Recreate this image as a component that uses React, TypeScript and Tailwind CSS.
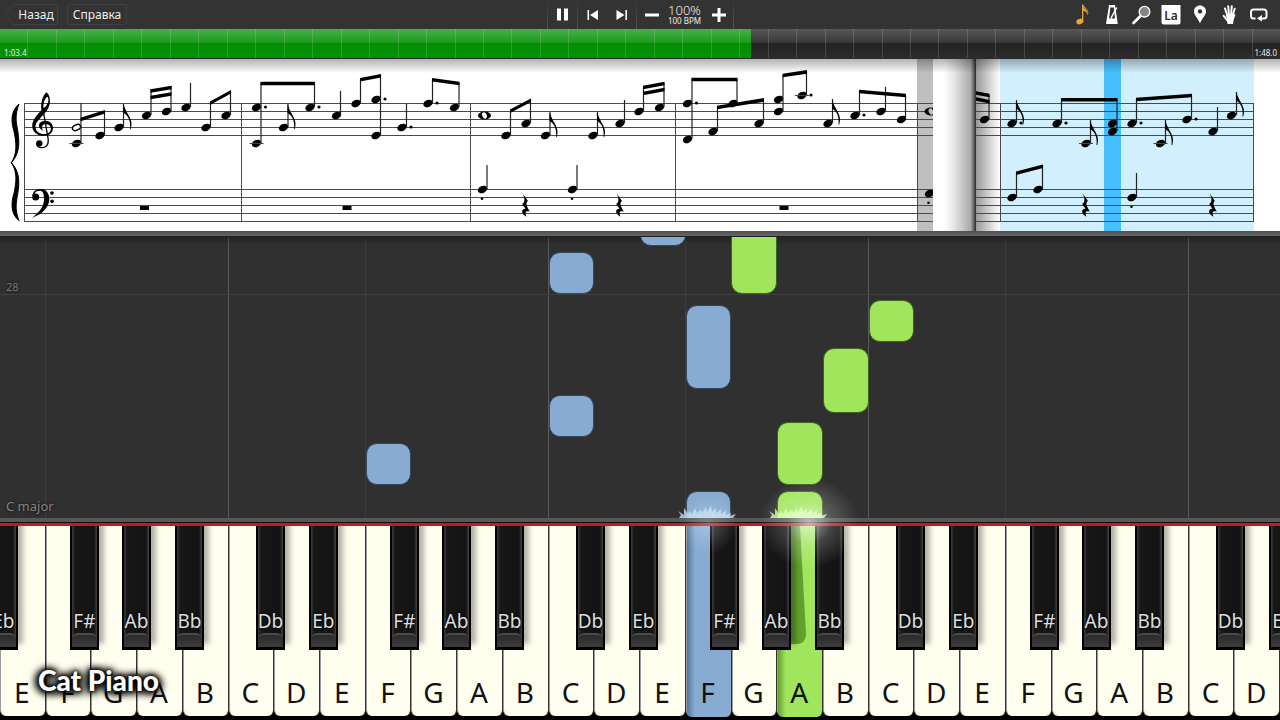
import type { ReactNode } from "react";

const LANES = 28;
const lanePercent = (lane: number) => `${(lane / LANES) * 100}%`;

/* ---------- Toolbar ---------- */

function IconButton({ label, children }: { label: string; children: ReactNode }) {
  return (
    <button type="button" aria-label={label} className="h-[29px] w-[29px] shrink-0">
      <svg viewBox="0 0 29 29" className="h-[29px] w-[29px]" fill="white">
        {children}
      </svg>
    </button>
  );
}

function Separator() {
  return <span className="h-[29px] w-px bg-linear-to-b from-transparent via-[#444444] to-[#555555]" />;
}

function Toolbar() {
  return (
    <header className="grid h-[29px] grid-cols-[1fr_auto_1fr] bg-[#333333] text-[#ececec]">
      <nav className="flex items-center gap-[9px] pl-1 text-xs">
        <button type="button" className="relative h-[21px] w-[54px] pl-[10px] text-center">
          <svg viewBox="0 0 54 21" className="absolute inset-0 h-[21px] w-[54px]" fill="none" stroke="#404040">
            <path d="M10 .5H53.500V20.500H10L.7 10.500Z" />
          </svg>
          <span className="relative">Назад</span>
        </button>
        <button type="button" className="h-[21px] w-[60px] rounded-xs border border-[#404040] leading-[19px]">
          Справка
        </button>
      </nav>

      <div className="flex items-center">
        <Separator />
        <IconButton label="Pause">
          <path d="M9 8.500h4v12H9zM16 8.500h4v12h-4z" />
        </IconButton>
        <Separator />
        <IconButton label="Previous">
          <path d="M9.500 10h1.600v10H9.500zM20 10v10l-8-5z" />
        </IconButton>
        <IconButton label="Next">
          <path d="M20 10h-1.600v10H20zM9.500 10v10l8-5z" />
        </IconButton>
        <Separator />
        <IconButton label="Slower">
          <path d="M8 13.500h14v3H8z" />
        </IconButton>
        <div className="flex w-[38px] flex-col items-center">
          <span className="text-[13px] leading-[13px] font-light">100%</span>
          <span className="whitespace-nowrap text-[8px] leading-[8px]">100 BPM</span>
        </div>
        <IconButton label="Faster">
          <path d="M8 13.500h5.500V8h3v5.500H22v3h-5.500V22h-3v-5.500H8z" />
        </IconButton>
        <Separator />
      </div>

      <div className="flex justify-end pr-1.5">
        <div className="flex w-[206px] justify-between">
          <IconButton label="Notes">
            <ellipse cx="11.800" cy="21.500" rx="3.600" ry="2.700" transform="rotate(-20 11.800 21.500)" fill="#e9a33b" />
            <path
              d="M14 4.500h1.300c.4 3 5 4.300 5 8 0 1.300-.3 2-.8 3 .2-3-2-4-4.200-4.800v10.800H14zM15.300 8c2 2 4.500 3 4.400 5.300"
              fill="#e9a33b"
            />
            <path d="M15.500 7.500c2 2.300 4.500 2.800 4.400 6" fill="none" stroke="#6b4e24" strokeWidth=".7" />
          </IconButton>
          <IconButton label="Metronome">
            <path fillRule="evenodd" d="M11 5h6l2.800 19H8zM12.400 7.500 11 18.500h6L15.800 7.500z" />
            <path d="M12.800 18.500 18.800 7.500" stroke="white" strokeWidth="1.500" />
          </IconButton>
          <IconButton label="Zoom">
            <path d="M13.500 16 6.500 23" stroke="white" strokeWidth="2.600" strokeLinecap="round" />
            <circle cx="17.500" cy="11.700" r="5.300" fill="#858585" stroke="white" strokeWidth="1.400" />
          </IconButton>
          <IconButton label="Note names">
            <path d="M4.500 5h19v17q0 2.500-2.500 2.500h-14Q4.500 24.500 4.500 22z" />
            <text x="14" y="19.500" textAnchor="middle" fontSize="12" fontWeight="600" fill="#2b2b2b">
              La
            </text>
          </IconButton>
          <IconButton label="Marker">
            <path
              fillRule="evenodd"
              d="M14 5.500c3.400 0 6 2.600 6 5.900 0 3.800-4 6.600-6 12-2-5.400-6-8.200-6-12 0-3.300 2.600-5.900 6-5.900zm0 3.700a2.200 2.200 0 1 0 0 4.400 2.200 2.200 0 0 0 0-4.400z"
            />
          </IconButton>
          <IconButton label="Hands">
            <path d="M10 14h7.500l2 .5-2 6-.5 3.500h-5.500l-.5-3z" />
            <path
              d="m11.500 16-2.500-7.500M13 15l-.8-8.800M15 15l.8-8.800M16.500 16l2.200-7.200M11.500 20.500l-3.800-4.700"
              fill="none"
              stroke="white"
              strokeWidth="2"
              strokeLinecap="round"
            />
          </IconButton>
          <IconButton label="Loop">
            <path
              d="M10.500 18.500H8.500A2.500 2.500 0 0 1 6 16v-4A2.500 2.500 0 0 1 8.500 9.500h10.500A2.500 2.500 0 0 1 21.500 12v4a2.500 2.500 0 0 1-2.500 2.500H16.500"
              fill="none"
              stroke="white"
              strokeWidth="2"
            />
            <path d="M12 18.500 17 15v6.500z" />
          </IconButton>
        </div>
      </div>
    </header>
  );
}

/* ---------- Song position ---------- */

function Timeline() {
  return (
    <div className="relative h-[30px] border-b border-[#2c2c2c] bg-[linear-gradient(#565656,#3a3a3a_45%,#232323_50%,#2b2b2b)] text-[8px] text-[#e8e8e8]">
      <div className="h-full w-[58.700%] bg-[linear-gradient(#45b045,#1f9c1f_45%,#028f02_50%,#059105)]" />
      <div className="absolute inset-0 flex">
        {Array.from({ length: 45 }, (_, i) => (
          <span key={i} className={i === 0 ? "flex-1" : "flex-1 border-l border-white/15"} />
        ))}
      </div>
      <span className="absolute bottom-0 left-1 leading-[10px]">1:03.4</span>
      <span className="absolute right-[3px] bottom-0 leading-[10px]">1:48.0</span>
    </div>
  );
}

/* ---------- Sheet music ---------- */

type HeadData = { x: number; y: number; dot?: boolean; ledger?: boolean };
type Line = [number, number, number, number];

function Head({ x, y, dot, ledger }: HeadData) {
  return (
    <g>
      <ellipse cx={x} cy={y} rx="4.900" ry="3.500" transform={`rotate(-25 ${x} ${y})`} />
      {dot && <circle cx={x + 9} cy={y - 0.5} r="1.600" />}
      {ledger && <path d={`M${x - 7} ${y}h14`} stroke="#444" strokeWidth="1" />}
    </g>
  );
}

function Stem({ x, from, to }: { x: number; from: number; to: number }) {
  return <path d={`M${x} ${from}V${to}`} stroke="#222" strokeWidth="1.200" />;
}

function Beam({ line }: { line: Line }) {
  const [x1, y1, x2, y2] = line;
  return <path d={`M${x1 - 0.5} ${y1 - 1.6}L${x2 + 0.5} ${y2 - 1.6}v3.600L${x1 - 0.5} ${y1 + 2}z`} />;
}

function Flag({ x, y }: { x: number; y: number }) {
  return <path transform={`translate(${x} ${y})`} d="M-.5 0C1 5 3 8 5 12c3 6 3 8 1.700 13.300L6 25c.8-7-1-13-6.500-16z" />;
}

function WholeRest({ x }: { x: number }) {
  return <path d={`M${x - 4.5} 147h9v4h-9z`} />;
}

function QuarterRest({ x }: { x: number }) {
  return (
    <path
      transform={`translate(${x - 60.3} -1) scale(.3333)`}
      d="M173 407 188 428C181 436 183 441 194 461 182 457 178 463 184 476 166 467 168 451 181 452L171 438C179 432 180 424 173 407z"
    />
  );
}

function Staves({ from, to }: { from: number; to: number }) {
  return (
    <g stroke="#4a4a4a" strokeWidth="1">
      {[44.5, 52.5, 60.5, 68.5, 76.5, 130.5, 138.5, 146.5, 154.5, 162.5].map((y) => (
        <path key={y} d={`M${from} ${y}H${to}`} />
      ))}
    </g>
  );
}

function Barlines({ xs }: { xs: number[] }) {
  return (
    <g stroke="#4a4a4a" strokeWidth="1">
      {xs.map((x) => (
        <path key={x} d={`M${x} 44V163`} />
      ))}
    </g>
  );
}

function Clefs() {
  return (
    <g transform="translate(0 -1) scale(.3333)">
      <path d="M57 138C50 158 46 175 50 200 56 235 66 280 34 314 54 285 48 250 42 220 34 195 30 160 57 138zM57 488C50 468 46 451 50 426 56 391 66 348 34 314 54 343 48 376 42 406 34 431 30 466 57 488z" strokeWidth="3" stroke="#000" />
      <path
        fillRule="evenodd"
        d="M139 103C147 108 152 122 149 138 145 158 132 168 121 180 110 192 105 198 107 210 109 224 124 230 138 228 150 226 154 217 152 208 150 200 142 197 134 199 126 201 123 209 130 218 117 213 114 203 119 196 125 186 144 186 153 195 162 205 162 222 147 230 130 238 105 232 98 212 92 192 108 174 124 157 122 135 127 115 139 103zM143 116C136 118 128 134 131 151 140 143 150 130 143 116z"
      />
      <path d="M128 148 144 240C148 262 136 269 126 269 114 269 109 262 111 256" fill="none" stroke="#000" strokeWidth="4" />
      <circle cx="118" cy="256" r="9.500" />
      <path d="M97 415C97 400 110 393 122 393 140 393 148 408 148 424 147 450 125 470 96 479 118 462 132 448 132 422 132 405 128 398 119 398 110 398 104 402 103 410z" />
      <circle cx="107" cy="417" r="10.500" />
      <circle cx="156" cy="405" r="5.500" />
      <circle cx="156" cy="430" r="5.500" />
    </g>
  );
}

const leftHeads: HeadData[] = [
  { x: 76.5, y: 84.5, ledger: true },
  { x: 100, y: 76.5 },
  { x: 119, y: 68.5 },
  { x: 146.5, y: 56.5 },
  { x: 166.5, y: 52.5 },
  { x: 186, y: 48.5 },
  { x: 206, y: 68.5 },
  { x: 226, y: 56.5 },
  { x: 256.5, y: 48.5, dot: true },
  { x: 256.5, y: 84.5, ledger: true },
  { x: 283.5, y: 68.5 },
  { x: 310, y: 48.5, dot: true },
  { x: 336.5, y: 56.5 },
  { x: 356, y: 44.5 },
  { x: 376, y: 40.5, dot: true },
  { x: 376, y: 76.5 },
  { x: 402, y: 68.5, dot: true },
  { x: 428, y: 44.5, dot: true },
  { x: 454.5, y: 48.5 },
  { x: 506, y: 76.5 },
  { x: 526, y: 64.5 },
  { x: 545.5, y: 76.5 },
  { x: 593, y: 76.5 },
  { x: 620, y: 64.5 },
  { x: 639, y: 52.5 },
  { x: 659.5, y: 48.5 },
  { x: 687.5, y: 44.5, dot: true },
  { x: 687.5, y: 80.5 },
  { x: 733, y: 44.5 },
  { x: 713, y: 72.5 },
  { x: 759, y: 64.5 },
  { x: 778.5, y: 40.5 },
  { x: 778.5, y: 52.5 },
  { x: 802, y: 36.5, dot: true, ledger: true },
  { x: 828, y: 64.5 },
  { x: 855, y: 56.5, dot: true },
  { x: 881, y: 52.5 },
  { x: 901.5, y: 60.5 },
  { x: 482.5, y: 130.5 },
  { x: 572.5, y: 130.5 },
  { x: 929.5, y: 134.5 },
];

const leftStems: [number, number, number][] = [
  [81, 44, 84], [104.5, 52, 76], [123.5, 45, 68], [151, 30, 56], [171, 27, 52], [190.5, 24, 48],
  [210.5, 44, 68], [230.5, 32, 56], [261, 24, 84], [288, 45, 68], [314.5, 24, 48], [340.5, 32, 56],
  [360.5, 20, 44], [380.5, 16, 76], [406.5, 45, 68], [432.5, 20, 44], [459, 24, 48], [510.5, 52, 76],
  [530.5, 40, 64], [550, 53, 76], [597.5, 53, 76], [624.5, 41, 64], [643.5, 28, 52], [664, 24, 48],
  [692, 20, 80], [737, 20, 44], [717.5, 48, 72], [763.5, 40, 64], [783, 16, 52], [806.5, 12, 36],
  [832.5, 40, 64], [859.5, 32, 56], [885.5, 28, 52], [905.5, 36, 60], [487, 106, 130], [577, 106, 130],
];

const leftBeams: Line[] = [
  [81, 60.3, 104.5, 52.5], [151, 31.8, 171, 28.3], [151, 38.3, 171, 34.8], [210.5, 44, 230.5, 32.5],
  [261, 24.3, 314.5, 24.3], [360.5, 20.5, 380.5, 16.5], [432.5, 20.5, 459, 24.3], [510.5, 52, 530.5, 41],
  [643.5, 28.3, 664, 24.3], [643.5, 34.3, 664, 30.3], [692, 20.3, 737, 20.3], [717.5, 48.3, 763.5, 40.7],
  [783, 16.3, 806.5, 12.7], [859.5, 32.3, 905.5, 36.3],
];

const rightHeads: HeadData[] = [
  { x: 984.5, y: 60.5 },
  { x: 1012, y: 64.5, dot: true },
  { x: 1057, y: 64.5, dot: true },
  { x: 1086, y: 84.5, ledger: true },
  { x: 1112.5, y: 64.5 },
  { x: 1112.5, y: 72.5 },
  { x: 1132, y: 64.5, dot: true },
  { x: 1160.5, y: 84.5, ledger: true },
  { x: 1187, y: 60.5, dot: true },
  { x: 1213, y: 72.5 },
  { x: 1231.5, y: 56.5 },
  { x: 1012, y: 138.5 },
  { x: 1038, y: 130.5 },
  { x: 1132, y: 138.5 },
];

const rightStems: [number, number, number][] = [
  [989, 36, 60], [1016.5, 41, 64], [1061.5, 40, 64], [1090.5, 61, 84], [1117, 40, 72], [1136.5, 40, 64],
  [1165.5, 61, 84], [1191.5, 36, 60], [1217.5, 48, 72], [1236.5, 33, 56], [1016.5, 114, 138],
  [1042.5, 106, 130], [1136.5, 114, 138],
];

const rightBeams: Line[] = [
  [975, 33.5, 989, 36.3], [975, 39.5, 989, 42.5], [1061.5, 40.5, 1117, 40.5],
  [1136.5, 40.3, 1191.5, 36.3], [1016.5, 114, 1042.5, 107],
];

function SheetMusic() {
  return (
    <section aria-label="Sheet music" className="relative flex h-[172px] overflow-hidden bg-white">
      <div className="min-w-0 flex-[933]">
        <svg viewBox="0 0 933 172" preserveAspectRatio="xMinYMin slice" className="block h-[172px] w-full">
          <rect x="917" y="0" width="16" height="172" fill="#bfbfbf" />
          <Staves from={24} to={933} />
          <Barlines xs={[24.5, 241.5, 470.5, 675.5, 917.5]} />
          <Clefs />
          <ellipse cx="76.500" cy="68.500" rx="4.300" ry="2.700" transform="rotate(-25 76.500 68.500)" fill="white" stroke="#000" strokeWidth="1.400" />
          <path fillRule="evenodd" d="M478 56.500a6.500 4 0 1 0 13 0a6.500 4 0 1 0-13 0z" />
          <ellipse cx="484.500" cy="56.500" rx="2.200" ry="3.200" transform="rotate(-25 484.500 56.500)" fill="white" />
          <path d="M924.500 52.500a6.500 4 0 1 0 13 0a6.500 4 0 1 0-13 0z" />
          <ellipse cx="931" cy="52.500" rx="2.200" ry="3.200" transform="rotate(-25 931 52.500)" fill="#bfbfbf" />
          {leftHeads.map((h, i) => <Head key={i} {...h} />)}
          {leftStems.map(([x, from, to], i) => <Stem key={i} x={x} from={from} to={to} />)}
          {leftBeams.map((line, i) => <Beam key={i} line={line} />)}
          <Flag x={124} y={45} />
          <Flag x={288} y={45} />
          <Flag x={550} y={53} />
          <Flag x={597.5} y={53} />
          <Flag x={832.5} y={40.5} />
          <WholeRest x={144.5} />
          <WholeRest x={347} />
          <WholeRest x={784} />
          <QuarterRest x={525.5} />
          <QuarterRest x={619.5} />
          <circle cx="482" cy="139.700" r="1.300" />
          <circle cx="572" cy="139.700" r="1.300" />
          <circle cx="928.500" cy="143.700" r="1.300" />
        </svg>
      </div>
      <div className="flex-[43] bg-[linear-gradient(90deg,#fff_25%,#e4e4e4_50%,#a8a8a8_88%,#4a4a4a_97%,#2a2a2a)]" />
      <div className="min-w-0 flex-[304]">
        <svg viewBox="976 0 304 172" preserveAspectRatio="xMinYMin slice" className="block h-[172px] w-full">
          <defs>
            <linearGradient id="fold">
              <stop offset="0" stopColor="#9a9a9a" />
              <stop offset="1" stopColor="#ffffff" />
            </linearGradient>
          </defs>
          <rect x="976" y="0" width="24" height="172" fill="url(#fold)" />
          <rect x="1000" y="0" width="254" height="172" fill="#d1effd" />
          <rect x="1104" y="0" width="17" height="172" fill="#48bffd" />
          <Staves from={976} to={1254} />
          <Barlines xs={[1000.5, 1253.5]} />
          {rightHeads.map((h, i) => <Head key={i} {...h} />)}
          {rightStems.map(([x, from, to], i) => <Stem key={i} x={x} from={from} to={to} />)}
          {rightBeams.map((line, i) => <Beam key={i} line={line} />)}
          <Flag x={1016.5} y={40.5} />
          <Flag x={1090.5} y={61} />
          <Flag x={1165.5} y={61} />
          <Flag x={1236.5} y={32.5} />
          <QuarterRest x={1085.5} />
          <QuarterRest x={1212.5} />
          <circle cx="1131.500" cy="147.700" r="1.300" />
        </svg>
      </div>
      <div className="pointer-events-none absolute inset-x-0 top-0 h-[14px] bg-linear-to-b from-black/30 to-transparent" />
    </section>
  );
}

/* ---------- Falling notes ---------- */

type Falling = { lane: number; top: number; height: number; hand: "left" | "right" };

const fallingNotes: Falling[] = [
  { lane: 12, top: 15, height: 42, hand: "left" },
  { lane: 14, top: -32, height: 41, hand: "left" },
  { lane: 15, top: 68, height: 84, hand: "left" },
  { lane: 12, top: 158, height: 42, hand: "left" },
  { lane: 8, top: 206, height: 42, hand: "left" },
  { lane: 15, top: 254, height: 60, hand: "left" },
  { lane: 16, top: -24, height: 81, hand: "right" },
  { lane: 19, top: 63, height: 42, hand: "right" },
  { lane: 18, top: 111, height: 65, hand: "right" },
  { lane: 17, top: 185, height: 63, hand: "right" },
  { lane: 17, top: 254, height: 60, hand: "right" },
];

const handStyle = {
  left: "bg-[#87abd1] border-[#34495f]",
  right: "bg-[#a1e55c] border-[#3f6420]",
};

function laneLine(lane: number) {
  if (lane % 7 === 5) return "flex-1 border-l border-[#5a5a5a]";
  if (lane % 7 === 1) return "flex-1 border-l border-[#3c3c3c]";
  return "flex-1";
}

function Sparks({ lane, color }: { lane: number; color: string }) {
  return (
    <svg
      viewBox="0 0 60 18"
      className="absolute bottom-0 h-[14px] w-[60px] -translate-x-2"
      preserveAspectRatio="none"
      style={{ left: lanePercent(lane) }}
      fill={color}
    >
      <path d="M1 18 3 14 0 9 6 14 6 5 10 13 12 9 14 13 17 5 19 12 23 7 24 12 28 4 29 11 33 2 34 10 38 5 38 12 43 6 43 13 48 8 48 14 53 11 52 15 58 13 55 18z" fillOpacity=".8" />
    </svg>
  );
}

function NoteRoll() {
  return (
    <section aria-label="Falling notes" className="relative min-h-[281px] flex-1 overflow-hidden bg-[#303030]">
      <div className="absolute inset-0 flex">
        {Array.from({ length: LANES }, (_, lane) => (
          <span key={lane} className={laneLine(lane)} />
        ))}
      </div>
      <div className="absolute inset-x-0 top-[57px] h-px bg-[#3f3f3f]" />
      <div className="absolute inset-x-0 top-0 h-2 bg-linear-to-b from-black/30 to-transparent" />
      <span className="absolute top-[42px] left-1.5 text-[11px] leading-4 text-[#7a7a7a] text-shadow-[0_0_3px_#000]">28</span>
      <span className="absolute bottom-1 left-1.5 text-[13px] leading-4 text-[#868686] text-shadow-[0_0_3px_#000]">C major</span>
      {fallingNotes.map((note, i) => (
        <div
          key={i}
          className={`absolute rounded-[11px] border ${handStyle[note.hand]}`}
          style={{ left: lanePercent(note.lane), width: lanePercent(1), top: note.top, height: note.height }}
        />
      ))}
      <Sparks lane={15} color="#c4dcf4" />
      <Sparks lane={17} color="#d6ffae" />
    </section>
  );
}

/* ---------- Keyboard ---------- */

const whiteNames = ["E", "F", "G", "A", "B", "C", "D"];

const blackKeys = [
  { name: "Eb", offset: -11 },
  { name: "F#", offset: 70 },
  { name: "Ab", offset: 122 },
  { name: "Bb", offset: 175 },
  { name: "Db", offset: 256 },
];

function whiteKeyStyle(index: number) {
  if (index === 15)
    return "mb-[3px] pb-[7px] bg-[linear-gradient(90deg,#54779e,#87abd1_18%,#87abd1)]";
  if (index === 17)
    return "mb-[3px] pb-[7px] bg-[linear-gradient(90deg,#689f35,#a1e55c_18%,#a1e55c)]";
  return "mb-1 pb-1.5 bg-[#fffeef]";
}

function WhiteKey({ index }: { index: number }) {
  return (
    <button
      type="button"
      className={`flex min-w-0 flex-1 items-end justify-center rounded-b-md border-r border-l border-r-[#333] border-l-[#999] pr-0.5 text-[28px] leading-[36px] text-[#111] ${whiteKeyStyle(index)}`}
    >
      {whiteNames[index % 7]}
    </button>
  );
}

function BlackKey({ name, offset, octave }: { name: string; offset: number; octave: number }) {
  return (
    <button
      type="button"
      className="absolute top-0 flex h-[124px] w-[2.250%] flex-col items-center justify-end border-x-2 border-b-3 border-black bg-[linear-gradient(90deg,#3c3c3c,#171717_12%,#131313_88%,#444)] shadow-[5px_-6px_5px_0_rgba(0,0,0,0.3)]"
      style={{ left: `${((octave * 320 + offset) / 1280) * 100}%` }}
    >
      <span className="text-[19px] leading-[22px] whitespace-nowrap text-[#dcdcdc] text-shadow-[0_0_3px_#000]">{name}</span>
      <span className="mt-px h-[14px] w-full rounded-t-md border-t-2 border-[#4a4a4a] bg-linear-to-b from-[#2a2a2a] to-[#3c3c3c]" />
    </button>
  );
}

function Keyboard() {
  return (
    <section aria-label="Keyboard" className="relative h-[194px] shrink-0 overflow-hidden bg-black">
      <div className="flex h-full">
        {Array.from({ length: LANES }, (_, i) => (
          <WhiteKey key={i} index={i} />
        ))}
      </div>
      <svg
        viewBox="0 0 16 120"
        preserveAspectRatio="none"
        className="absolute top-0 h-[120px] w-4"
        style={{ left: "61.800%" }}
        fill="#4f8a1f"
        fillOpacity=".75"
      >
        <path d="M0 0h9l6 108q0 10-10 10H0z" />
      </svg>
      {[0, 1, 2, 3, 4].flatMap((octave) =>
        blackKeys
          .filter((key) => octave < 4 || key.name === "Eb")
          .map((key) => <BlackKey key={`${key.name}${octave}`} {...key} octave={octave} />),
      )}
      <div className="absolute bottom-[22px] left-[38px] text-[28px] leading-[36px] font-black whitespace-nowrap text-white [font-family:Lato,sans-serif] text-shadow-[0_0_3px_#000,0_0_5px_#000,0_0_8px_#000,0_0_10px_#000,3px_2px_8px_#000,-3px_1px_8px_#000]">
        Cat Piano
      </div>
    </section>
  );
}

export default function App() {
  return (
    <main className="flex min-h-screen w-full flex-col overflow-hidden bg-[#303030] [font-family:'Noto_Sans','Open_Sans',sans-serif]">
      <Toolbar />
      <Timeline />
      <SheetMusic />
      <div className="h-1.5 shrink-0 border-b border-[#1f1f1f] bg-linear-to-b from-[#505050] to-[#666666]" />
      <NoteRoll />
      <div className="relative shrink-0">
        <div className="h-1 bg-[#575757]" />
        <div className="h-1 border-t border-[#1c0a0a] bg-[#b02424]" />
        <Keyboard />
        <div
          className="pointer-events-none absolute -top-10 h-[90px] w-[100px] -translate-x-9 bg-[radial-gradient(closest-side,rgba(255,255,255,0.6),rgba(255,255,255,0.2)_45%,transparent)]"
          style={{ left: lanePercent(17.4) }}
        />
        <div
          className="pointer-events-none absolute -top-6 h-[60px] w-[60px] -translate-x-2 bg-[radial-gradient(closest-side,rgba(255,255,255,0.25),transparent)]"
          style={{ left: lanePercent(15) }}
        />
      </div>
    </main>
  );
}
